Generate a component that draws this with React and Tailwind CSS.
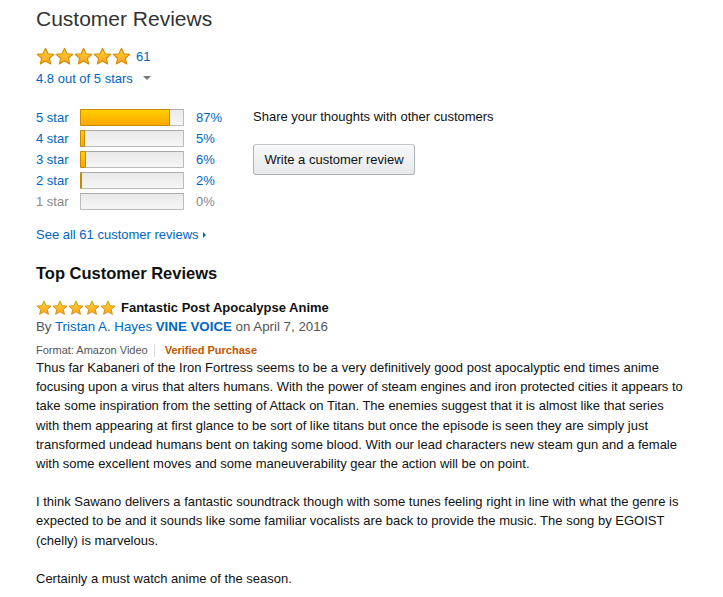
import React from "react";

function Star({ size = 19, id }) {
  return (
    <svg width={size} height={size} viewBox="0 0 24 24" className="block">
      <defs>
        <linearGradient id={id} x1="0" y1="0" x2="0" y2="1">
          <stop offset="0" stopColor="#ffd23a" />
          <stop offset="1" stopColor="#ffa41c" />
        </linearGradient>
      </defs>
      <path
        d="M12 1.6l3.1 6.9 7.4.7-5.6 5 1.7 7.3L12 17.7l-6.6 3.8 1.7-7.3-5.6-5 7.4-.7z"
        fill={`url(#${id})`}
        stroke="#d38b00"
        strokeWidth="1.3"
        strokeLinejoin="round"
      />
    </svg>
  );
}

function Stars({ size, prefix }) {
  return (
    <div className="flex">
      {[0, 1, 2, 3, 4].map((i) => (
        <Star key={i} size={size} id={`${prefix}${i}`} />
      ))}
    </div>
  );
}

const rows = [
  { label: "5 star", pct: 87 },
  { label: "4 star", pct: 5 },
  { label: "3 star", pct: 6 },
  { label: "2 star", pct: 2 },
  { label: "1 star", pct: 0 },
];

export default function App() {
  return (
    <div
      className="bg-white text-[13px] leading-[19px] text-[#111] pl-[36px] pr-[35px] pt-[4px] w-[723px] h-[597px] overflow-hidden"
      style={{ fontFamily: '"Liberation Sans", Arial, sans-serif' }}
    >
      <h1 className="text-[21px] leading-[30px] text-[#333] font-normal">Customer Reviews</h1>
      <div className="flex items-center gap-[5px] mt-[13px]">
        <Stars size={19} prefix="a" />
        <span className="text-[#0066c0] text-[13px]">61</span>
      </div>
      <div className="flex items-center mt-[3px] text-[#0066c0]">
        <span>4.8 out of 5 stars</span>
        <span className="ml-[10px] mt-[-2px] w-0 h-0 border-l-[4px] border-r-[4px] border-t-[4px] border-l-transparent border-r-transparent border-t-[#777]"></span>
      </div>

      <div className="flex mt-[19px]">
        <div className="flex flex-col w-[217px]">
          {rows.map((r) => {
            const muted = r.pct === 0;
            return (
              <div key={r.label} className="flex items-center h-[21px]">
                <span className={`w-[44px] ${muted ? "text-[#888]" : "text-[#0066c0]"}`}>{r.label}</span>
                <div className="relative w-[104px] h-[17px] border border-[#bbb] border-t-[#aaa] bg-[linear-gradient(#e9e9e9,#f6f6f6)] rounded-[1px]">
                  {r.pct > 0 && (
                    <div
                      className="absolute left-[-1px] top-[-1px] bottom-[-1px] border border-[#c88a00] bg-[linear-gradient(#ffce00,#ffa700)] rounded-[1px]"
                      style={{ width: `${Math.max(2, Math.round(r.pct * 1.03))}px` }}
                    ></div>
                  )}
                </div>
                <span className={`ml-[12px] ${muted ? "text-[#888]" : "text-[#0066c0]"}`}>{r.pct}%</span>
              </div>
            );
          })}
        </div>
        <div className="flex flex-col">
          <div className="text-[#111]">Share your thoughts with other customers</div>
          <button className="mt-[18px] w-[162px] h-[31px] border border-[#adb1b8] border-t-[#c6c8cc] rounded-[3px] bg-[linear-gradient(#f7f8fa,#e7e9ec)] text-[#111] text-[13px] shadow-[0_1px_0_rgba(255,255,255,0.6)_inset]">
            Write a customer review
          </button>
        </div>
      </div>

      <div className="flex items-center mt-[13px] text-[#0066c0]">
        <span>See all 61 customer reviews</span>
        <span className="ml-[4px] w-0 h-0 border-t-[3px] border-b-[3px] border-l-[3px] border-t-transparent border-b-transparent border-l-[#0066c0]"></span>
      </div>

      <h2 className="text-[16.5px] leading-[24px] font-bold text-[#111] mt-[17px]">Top Customer Reviews</h2>

      <div className="flex items-center mt-[13px]">
        <Stars size={16} prefix="b" />
        <span className="ml-[5px] font-bold text-[#111]">Fantastic Post Apocalypse Anime</span>
      </div>
      <div className="text-[#555] text-[13.3px]">
        By <span className="text-[#0066c0]">Tristan A. Hayes</span>{" "}
        <span className="text-[#0066c0] font-bold">VINE VOICE</span> on April 7, 2016
      </div>
      <div className="flex items-center mt-[7px] text-[11px] leading-[14px]">
        <span className="text-[#555]">Format: Amazon Video</span>
        <span className="mx-[6px] w-px h-[13px] bg-[#ddd]"></span>
        <span className="ml-[4px] text-[#c45500] font-bold">Verified Purchase</span>
      </div>
      <div className="mt-[1px] text-[#111] leading-[19.2px]">
        <p>
          Thus far Kabaneri of the Iron Fortress seems to be a very definitively good post apocalyptic end times anime
          focusing upon a virus that alters humans. With the power of steam engines and iron protected cities it appears to
          take some inspiration from the setting of Attack on Titan. The enemies suggest that it is almost like that series
          with them appearing at first glance to be sort of like titans but once the episode is seen they are simply just
          transformed undead humans bent on taking some blood. With our lead characters new steam gun and a female with
          some excellent moves and some maneuverability gear the action will be on point.
        </p>
        <p className="mt-[19px]">
          I think Sawano delivers a fantastic soundtrack though with some tunes feeling right in line with what the genre is
          expected to be and it sounds like some familiar vocalists are back to provide the music. The song by EGOIST
          (chelly) is marvelous.
        </p>
        <p className="mt-[19px]">Certainly a must watch anime of the season.</p>
      </div>
    </div>
  );
}
